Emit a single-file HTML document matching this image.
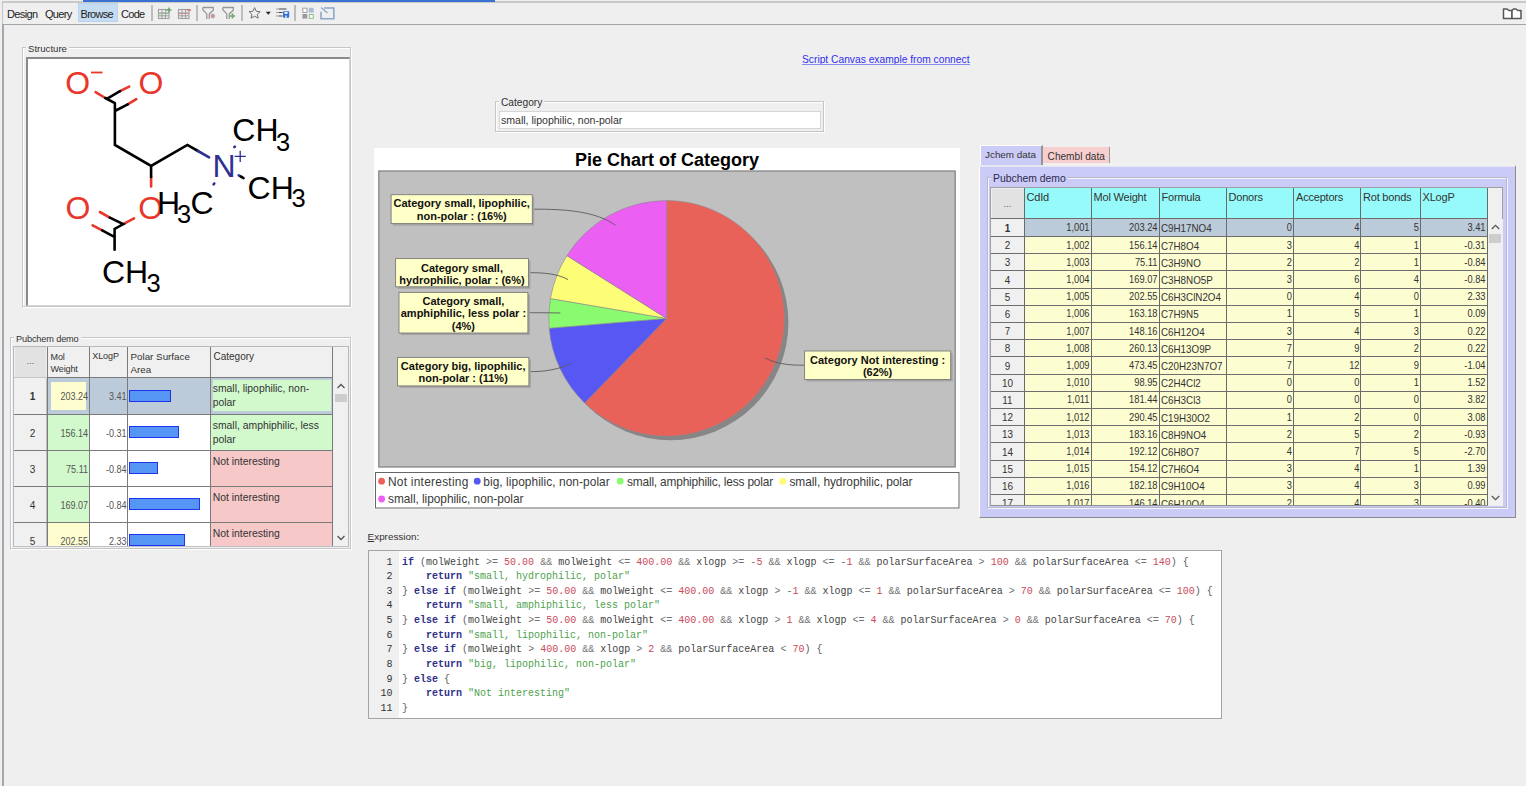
<!DOCTYPE html>
<html><head><meta charset="utf-8">
<style>
*{box-sizing:border-box}
html,body{margin:0;padding:0}
body{width:1526px;height:786px;overflow:hidden;background:#efefef;position:relative;font-family:"Liberation Sans",sans-serif;color:#222}
.a{position:absolute}
.t{position:absolute;white-space:nowrap;line-height:1}
/* group box */
.gb{position:absolute;border:1px solid #c6c6c6;box-shadow:inset 1px 1px 0 #fff,1px 1px 0 #fff}
.gbl{position:absolute;background:#efefef;padding:0 2px;font-size:10px;line-height:10px;color:#333}
</style></head><body>

<!-- top strip -->
<div class="a" style="left:2px;top:1px;width:1524px;height:2px;background:#c9c9c9"></div>
<div class="a" style="left:83px;top:0;width:412px;height:2px;background:#3a72d2"></div>
<!-- left window line -->
<div class="a" style="left:2px;top:2px;width:1px;height:22px;background:#c4c4c4"></div>
<div class="a" style="left:2px;top:24px;width:2px;height:762px;background:#a6a6ac"></div>
<!-- toolbar bottom line -->
<div class="a" style="left:2px;top:24px;width:1524px;height:1px;background:#a4a4aa"></div>

<div id="toolbar">
<div class="a" style="left:78px;top:3px;width:40px;height:19px;background:#c5dcf3;border:1px solid #b9d3ee"></div>
<div class="t" style="left:7px;top:9px;font-size:11px;letter-spacing:-0.6px;color:#222">Design</div>
<div class="t" style="left:45px;top:9px;font-size:11px;letter-spacing:-0.7px;color:#222">Query</div>
<div class="t" style="left:80.5px;top:9px;font-size:11px;letter-spacing:-0.7px;color:#222">Browse</div>
<div class="t" style="left:121px;top:9px;font-size:11px;letter-spacing:-0.7px;color:#222">Code</div>
<div class="a" style="left:151px;top:5px;width:2px;height:16px;background:#bdbdbd"></div>
<div class="a" style="left:196px;top:5px;width:2px;height:16px;background:#bdbdbd"></div>
<div class="a" style="left:241px;top:5px;width:2px;height:16px;background:#bdbdbd"></div>
<div class="a" style="left:294px;top:5px;width:2px;height:16px;background:#bdbdbd"></div>
<svg class="a" style="left:150px;top:0" width="200" height="24" viewBox="150 0 200 24">
 <!-- table plus -->
 <g fill="none" stroke="#a0a0a0" stroke-width="1.1">
  <rect x="158.5" y="9.5" width="10.5" height="9"/>
  <line x1="158.5" y1="13" x2="169" y2="13"/><line x1="158.5" y1="15.8" x2="169" y2="15.8"/>
  <line x1="162" y1="9.5" x2="162" y2="18.5"/><line x1="165.5" y1="9.5" x2="165.5" y2="18.5"/>
 </g>
 <line x1="158.5" y1="13.5" x2="169" y2="13.5" stroke="#8fb88f" stroke-width="1"/>
 <path d="M169 7.5v5M166.5 10h5" stroke="#6fa56f" stroke-width="1.6"/>
 <!-- table minus -->
 <g fill="none" stroke="#a0a0a0" stroke-width="1.1">
  <rect x="178.5" y="9.5" width="10.5" height="9"/>
  <line x1="178.5" y1="13" x2="189" y2="13"/><line x1="178.5" y1="15.8" x2="189" y2="15.8"/>
  <line x1="182" y1="9.5" x2="182" y2="18.5"/><line x1="185.5" y1="9.5" x2="185.5" y2="18.5"/>
 </g>
 <line x1="178.5" y1="13.5" x2="189" y2="13.5" stroke="#c89090" stroke-width="1"/>
 <path d="M187 10h4" stroke="#d07070" stroke-width="1.4"/>
 <!-- filter dot -->
 <path d="M202.8 7.5h10.5v2.8l-4 3.6v5" fill="none" stroke="#989898" stroke-width="1.3"/>
 <path d="M202.8 7.5v2.2l4 4.2v5" fill="none" stroke="#989898" stroke-width="1.3"/>
 <circle cx="212.8" cy="16.1" r="2.3" fill="#c99a9a"/>
 <!-- filter plus -->
 <path d="M222.8 7.5h10.5v2.8l-4 3.6v5" fill="none" stroke="#989898" stroke-width="1.3"/>
 <path d="M222.8 7.5v2.2l4 4.2v5" fill="none" stroke="#989898" stroke-width="1.3"/>
 <path d="M232.5 13.5v5M230 16h5" stroke="#6fa56f" stroke-width="1.6"/>
 <!-- star -->
 <path d="M254.6 7.6l1.7 3.7 3.9.4-2.9 2.6.9 3.9-3.6-2-3.6 2 .9-3.9-2.9-2.6 3.9-.4z" fill="none" stroke="#707070" stroke-width="1" stroke-linejoin="round"/>
 <path d="M265.8 11.8h5l-2.5 3z" fill="#222"/>
 <!-- list save -->
 <path d="M276.5 9h1M278.5 9h8M276.5 12.5h1M278.5 12.5h4M276.5 16h1M278.5 16h4" stroke="#444" stroke-width="1.1"/>
 <rect x="283" y="11.2" width="6.2" height="6.6" rx="0.8" fill="#3572d6"/>
 <rect x="284.5" y="12" width="3" height="1.8" fill="#fff"/>
 <rect x="285" y="15.5" width="2" height="2.3" fill="#bcd0f0"/>
 <!-- grid -->
 <rect x="302.8" y="8.2" width="4.2" height="4.2" fill="#fff" stroke="#a0a0a0" stroke-width="1"/>
 <rect x="308.8" y="7.8" width="4.8" height="4.8" fill="#a9bcd6"/>
 <rect x="302.4" y="14" width="4.8" height="4.6" fill="#9a9a9a"/>
 <rect x="309.3" y="14.5" width="4" height="3.8" fill="#fff" stroke="#8fb88f" stroke-width="1"/>
 <!-- arrow box -->
 <path d="M324 8h9.8v10.8h-12.8v-7" fill="none" stroke="#8aa6cb" stroke-width="1.6"/>
 <path d="M321 7.5l6.5 5.5" stroke="#8aa6cb" stroke-width="1.2"/>
</svg>
<svg class="a" style="left:1500px;top:6px" width="24" height="14" viewBox="0 0 24 14">
 <path d="M3.5 3v9.5h8.5v-8h-3.2l-1.8-1.5z" fill="#fff" stroke="#555" stroke-width="1.5" stroke-linejoin="round"/>
 <path d="M12 4.5v8h9v-8h-3.2l-1.8-1.5h-2.5z" fill="#fff" stroke="#555" stroke-width="1.5" stroke-linejoin="round"/>
</svg>
</div>
<div id="structure">
<div class="gb" style="left:22px;top:47px;width:329px;height:260px"></div>
<div class="gbl" style="left:26px;top:44px;font-size:9.6px;padding:0 2px">Structure</div>
<div class="a" style="left:26px;top:57px;width:324px;height:249px;background:#fff;border-top:2px solid #8a8a8a;border-left:2px solid #8a8a8a;border-right:1px solid #d4d4d4;border-bottom:1px solid #d4d4d4"></div>
<svg class="a" style="left:0;top:0" width="360" height="310" viewBox="0 0 360 310">
<g stroke-width="2.6" stroke-linecap="round" fill="none">
 <path stroke="#e8372b" d="M95.6 92.2L105.3 98M120 91.2L129.2 86.6M127.7 104.4L136.3 99.1M151.1 177L151.1 186.5M99.9 212L109.8 217.7M92.6 225.4L102.2 230.4M123.2 224.1L134 218.4"/>
 <path stroke="#000" stroke-linejoin="miter" d="M105.3 98L114.9 103.2M106.8 98.8L120 91.2M114.9 111L127.7 104.4M114.9 103.2L114.9 144.9L151.1 165.9L187.4 144.9L198 151M151.1 165.9L151.1 177M109.8 217.7L123.2 224.1L114.6 228.9L114.6 249.8M102.2 230.4L114.3 236.8"/>
 <path stroke="#2d3190" d="M198 151L209.1 157.3M234.3 147.2L234.9 146.6M238.7 175.4L241 176.7M213.6 184.3L214.3 183.5"/>
 <path stroke="#000" d="M241 176.7L243.5 178.2"/>
</g>
<g font-family="Liberation Sans" font-size="32" fill="#e8372b">
 <text x="65.3" y="94">O</text>
 <text x="138.6" y="94">O</text>
 <text x="65.5" y="219">O</text>
 <text x="138.3" y="219">O</text>
</g>
<rect x="91" y="71.6" width="11.5" height="1.8" fill="#e8372b"/>
<g font-family="Liberation Sans" font-size="32" fill="#000">
 <text x="232.3" y="140.6">CH</text><text x="276" y="150.7" font-size="25.5">3</text>
 <text x="247.6" y="198.8">CH</text><text x="291.6" y="207" font-size="25.5">3</text>
 <text x="157" y="213.6">H</text><text x="177" y="223" font-size="25.5">3</text><text x="190.6" y="213.6">C</text>
 <text x="102" y="283">CH</text><text x="146.6" y="291.6" font-size="25.5">3</text>
</g>
<text x="212.6" y="177.3" font-family="Liberation Sans" font-size="32" fill="#2d3190">N</text>
<path d="M234.6 156.4h11.2M240.2 150.8v11.2" stroke="#2d3190" stroke-width="1.3"/>
</svg>
</div>
<div id="lefttable">
<div class="gb" style="left:10px;top:337px;width:341px;height:212px"></div>
<div class="gbl" style="left:14px;top:333.5px;font-size:9.2px;letter-spacing:-0.15px">Pubchem demo</div>
<div class="a" style="left:13px;top:346px;width:336px;height:201px;background:#f0f0f0;border:1px solid #b8b8c0"></div>
<div class="a" style="left:15px;top:347px;width:31px;height:30px;background:#e2e2e2"></div>
<div class="t" style="left:15px;top:357px;width:31px;text-align:center;font-size:9px;color:#555">...</div>
<div class="t" style="left:50.5px;top:350.5px;font-size:9px;line-height:12.3px;color:#333;letter-spacing:-0.1px;white-space:normal;width:36px">Mol Weight</div>
<div class="t" style="left:92.3px;top:352px;font-size:9px;line-height:9px;color:#333;letter-spacing:-0.1px">XLogP</div>
<div class="t" style="left:130.5px;top:349.5px;font-size:9.8px;line-height:13.3px;color:#333;white-space:normal;width:75px">Polar Surface Area</div>
<div class="t" style="left:213.5px;top:348.5px;font-size:10px;line-height:15px;color:#333">Category</div>
<div class="a" style="left:14px;top:377px;width:33px;height:37px;background:#f0f0f0;border-right:1px solid #c0c0c0"></div>
<div class="t" style="left:16px;top:392.2px;width:33px;text-align:center;font-size:10px;font-weight:bold;color:#333">1</div>
<div class="a" style="left:47px;top:377px;width:42.5px;height:37px;background:#bccbda"></div>
<div class="a" style="left:51px;top:382px;width:34.5px;height:28px;background:#fdfdd0"></div>
<div class="t" style="left:40px;top:391.2px;width:48px;text-align:right;font-size:11px;color:#555;transform:scaleX(0.82);transform-origin:100% 50%">203.24</div>
<div class="a" style="left:89.5px;top:377px;width:38px;height:37px;background:#bccbda"></div>
<div class="t" style="left:89.5px;top:391.2px;width:36.5px;text-align:right;font-size:11px;color:#555;transform:scaleX(0.82);transform-origin:100% 50%">3.41</div>
<div class="a" style="left:127.5px;top:377px;width:83px;height:37px;background:#bccbda"></div>
<div class="a" style="left:129px;top:389.5px;width:42.30000000000001px;height:12px;background:#5596f5;border:1px solid #2233ee"></div>
<div class="a" style="left:210.5px;top:377px;width:122.5px;height:37px;background:#bccbda"></div>
<div class="a" style="left:212px;top:379px;width:119.5px;height:33px;background:#d2f9cc;border:1.5px solid #bfd0dc"></div>
<div class="t" style="left:212.7px;top:381.5px;font-size:10.4px;line-height:14.5px;color:#333">small, lipophilic, non-<br>polar</div>
<div class="a" style="left:14px;top:414px;width:33px;height:36px;background:#f0f0f0;border-right:1px solid #c0c0c0"></div>
<div class="t" style="left:16px;top:428.7px;width:33px;text-align:center;font-size:10px;font-weight:normal;color:#333">2</div>
<div class="a" style="left:47px;top:414px;width:42.5px;height:36px;background:#d2f9cc"></div>
<div class="t" style="left:40px;top:427.7px;width:48px;text-align:right;font-size:11px;color:#555;transform:scaleX(0.82);transform-origin:100% 50%">156.14</div>
<div class="a" style="left:89.5px;top:414px;width:38px;height:36px;background:#fff"></div>
<div class="t" style="left:89.5px;top:427.7px;width:36.5px;text-align:right;font-size:11px;color:#555;transform:scaleX(0.82);transform-origin:100% 50%">-0.31</div>
<div class="a" style="left:127.5px;top:414px;width:83px;height:36px;background:#fff"></div>
<div class="a" style="left:129px;top:426px;width:50.30000000000001px;height:12px;background:#5596f5;border:1px solid #2233ee"></div>
<div class="a" style="left:210.5px;top:414px;width:122.5px;height:36px;background:#d2f9cc"></div>
<div class="t" style="left:212.7px;top:418.5px;font-size:10.4px;line-height:14.5px;color:#333">small, amphiphilic, less<br>polar</div>
<div class="a" style="left:14px;top:450px;width:33px;height:36px;background:#f0f0f0;border-right:1px solid #c0c0c0"></div>
<div class="t" style="left:16px;top:464.7px;width:33px;text-align:center;font-size:10px;font-weight:normal;color:#333">3</div>
<div class="a" style="left:47px;top:450px;width:42.5px;height:36px;background:#d2f9cc"></div>
<div class="t" style="left:40px;top:463.7px;width:48px;text-align:right;font-size:11px;color:#555;transform:scaleX(0.82);transform-origin:100% 50%">75.11</div>
<div class="a" style="left:89.5px;top:450px;width:38px;height:36px;background:#fff"></div>
<div class="t" style="left:89.5px;top:463.7px;width:36.5px;text-align:right;font-size:11px;color:#555;transform:scaleX(0.82);transform-origin:100% 50%">-0.84</div>
<div class="a" style="left:127.5px;top:450px;width:83px;height:36px;background:#fff"></div>
<div class="a" style="left:129px;top:462px;width:29.400000000000006px;height:12px;background:#5596f5;border:1px solid #2233ee"></div>
<div class="a" style="left:210.5px;top:450px;width:122.5px;height:36px;background:#f6c8c8"></div>
<div class="t" style="left:212.7px;top:454.5px;font-size:10.4px;line-height:14.5px;color:#333">Not interesting</div>
<div class="a" style="left:14px;top:486px;width:33px;height:36px;background:#f0f0f0;border-right:1px solid #c0c0c0"></div>
<div class="t" style="left:16px;top:500.7px;width:33px;text-align:center;font-size:10px;font-weight:normal;color:#333">4</div>
<div class="a" style="left:47px;top:486px;width:42.5px;height:36px;background:#d2f9cc"></div>
<div class="t" style="left:40px;top:499.7px;width:48px;text-align:right;font-size:11px;color:#555;transform:scaleX(0.82);transform-origin:100% 50%">169.07</div>
<div class="a" style="left:89.5px;top:486px;width:38px;height:36px;background:#fff"></div>
<div class="t" style="left:89.5px;top:499.7px;width:36.5px;text-align:right;font-size:11px;color:#555;transform:scaleX(0.82);transform-origin:100% 50%">-0.84</div>
<div class="a" style="left:127.5px;top:486px;width:83px;height:36px;background:#fff"></div>
<div class="a" style="left:129px;top:498px;width:70.80000000000001px;height:12px;background:#5596f5;border:1px solid #2233ee"></div>
<div class="a" style="left:210.5px;top:486px;width:122.5px;height:36px;background:#f6c8c8"></div>
<div class="t" style="left:212.7px;top:490.5px;font-size:10.4px;line-height:14.5px;color:#333">Not interesting</div>
<div class="a" style="left:14px;top:522px;width:33px;height:24px;background:#f0f0f0;border-right:1px solid #c0c0c0"></div>
<div class="t" style="left:16px;top:536.7px;width:33px;text-align:center;font-size:10px;font-weight:normal;color:#333">5</div>
<div class="a" style="left:47px;top:522px;width:42.5px;height:24px;background:#fdfdd0"></div>
<div class="t" style="left:40px;top:535.7px;width:48px;text-align:right;font-size:11px;color:#555;transform:scaleX(0.82);transform-origin:100% 50%">202.55</div>
<div class="a" style="left:89.5px;top:522px;width:38px;height:24px;background:#fff"></div>
<div class="t" style="left:89.5px;top:535.7px;width:36.5px;text-align:right;font-size:11px;color:#555;transform:scaleX(0.82);transform-origin:100% 50%">2.33</div>
<div class="a" style="left:127.5px;top:522px;width:83px;height:24px;background:#fff"></div>
<div class="a" style="left:129px;top:534px;width:56.19999999999999px;height:12px;background:#5596f5;border:1px solid #2233ee"></div>
<div class="a" style="left:210.5px;top:522px;width:122.5px;height:24px;background:#f6c8c8"></div>
<div class="t" style="left:212.7px;top:526.5px;font-size:10.4px;line-height:14.5px;color:#333">Not interesting</div>
<div class="a" style="left:46.5px;top:347px;width:1.2px;height:199px;background:#7a7a7a"></div>
<div class="a" style="left:89.0px;top:347px;width:1.2px;height:199px;background:#7a7a7a"></div>
<div class="a" style="left:127.0px;top:347px;width:1.2px;height:199px;background:#7a7a7a"></div>
<div class="a" style="left:210.0px;top:347px;width:1.2px;height:199px;background:#7a7a7a"></div>
<div class="a" style="left:332.2px;top:347px;width:1.2px;height:199px;background:#7a7a7a"></div>
<div class="a" style="left:14px;top:376.5px;width:319px;height:1.2px;background:#7a7a7a"></div>
<div class="a" style="left:14px;top:413.5px;width:319px;height:1.2px;background:#7a7a7a"></div>
<div class="a" style="left:14px;top:449.5px;width:319px;height:1.2px;background:#7a7a7a"></div>
<div class="a" style="left:14px;top:485.5px;width:319px;height:1.2px;background:#7a7a7a"></div>
<div class="a" style="left:14px;top:521.5px;width:319px;height:1.2px;background:#7a7a7a"></div>
<div class="a" style="left:14px;top:376.5px;width:33px;height:1px;background:#c8c8c8"></div>
<div class="a" style="left:13px;top:546px;width:336px;height:1px;background:#c0c0c8"></div>
<div class="a" style="left:333.5px;top:377px;width:14px;height:169px;background:#f0f0f0"></div>
<div class="a" style="left:335px;top:394px;width:12px;height:8px;background:#cdcdcd"></div>
<svg class="a" style="left:334px;top:380px" width="14" height="12"><path d="M3.5 8l3.5-3.5 3.5 3.5" fill="none" stroke="#555" stroke-width="1.3"/></svg>
<svg class="a" style="left:334px;top:532px" width="14" height="12"><path d="M3.5 4l3.5 3.5 3.5-3.5" fill="none" stroke="#555" stroke-width="1.3"/></svg>
</div>
<div id="center">
<div class="t" style="left:802px;top:55px;font-size:10.25px;color:#3030ee">Script Canvas example from connect</div>
<div class="a" style="left:802px;top:64px;width:168px;height:1px;background:#8a8af5"></div>
<div class="gb" style="left:495px;top:101px;width:329px;height:31px"></div>
<div class="gbl" style="left:499px;top:98px;font-size:10.2px;padding:0 2px">Category</div>
<div class="a" style="left:499px;top:111px;width:322px;height:18px;background:#fff;border:1px solid #d6d6d6"></div>
<div class="t" style="left:501px;top:115px;font-size:10.55px;color:#333">small, lipophilic, non-polar</div>
</div>
<div id="chart">
<div class="a" style="left:374px;top:148px;width:586px;height:361px;background:#fff"></div>
<div class="t" style="left:374px;top:151px;width:586px;text-align:center;font-size:18px;font-weight:bold;color:#000">Pie Chart of Category</div>
<svg class="a" style="left:0;top:0" width="970" height="520" viewBox="0 0 970 520">
 <rect x="378.8" y="171" width="576.4" height="296" fill="#c0c0c0" stroke="#7f7f7f" stroke-width="1.2"/>
 <circle cx="670.6" cy="322.4" r="117.8" fill="#868686"/>
 <path d="M666.6 318.4L666.60 200.60A117.8 117.8 0 1 1 584.62 403.00Z" fill="#e9625a" stroke="#8a8a8a" stroke-width="0.6"/><path d="M666.6 318.4L584.62 403.00A117.8 117.8 0 0 1 549.21 328.26Z" fill="#5757f4" stroke="#8a8a8a" stroke-width="0.6"/><path d="M666.6 318.4L549.21 328.26A117.8 117.8 0 0 1 550.48 298.55Z" fill="#8afb70" stroke="#8a8a8a" stroke-width="0.6"/><path d="M666.6 318.4L550.48 298.55A117.8 117.8 0 0 1 566.92 255.63Z" fill="#fdfd78" stroke="#8a8a8a" stroke-width="0.6"/><path d="M666.6 318.4L566.92 255.63A117.8 117.8 0 0 1 666.60 200.60Z" fill="#eb60f3" stroke="#8a8a8a" stroke-width="0.6"/>
 <g fill="none" stroke="#5a5a5a" stroke-width="0.9">
  <path d="M532.3 209.2C565 209 595 211 615.5 225.2"/>
  <path d="M528.5 272.7C545 272.5 558 274 568 279.6"/>
  <path d="M527.9 312.7C540 312.7 552 312.8 560.3 313"/>
  <path d="M528.9 371.6C545 372 560 369 570.8 363.5"/>
  <path d="M804.6 365.2C790 365.2 778 364.5 765 358"/>
 </g>
 <g fill="#a4a4a4">
  <rect x="393" y="196.7" width="141.2" height="28.9"/>
  <rect x="397.6" y="260.6" width="132.9" height="28.2"/>
  <rect x="401" y="294.4" width="128.9" height="40.6"/>
  <rect x="399.6" y="359.4" width="131.3" height="28.5"/>
  <rect x="806.6" y="353" width="146.1" height="28.5"/>
 </g>
 <g fill="#ffffc8" stroke="#7a7a7a" stroke-width="0.9">
  <rect x="391.1" y="194.7" width="141.2" height="28.9"/>
  <rect x="395.6" y="258.6" width="132.9" height="28.2"/>
  <rect x="399" y="292.4" width="128.9" height="40.6"/>
  <rect x="397.6" y="357.4" width="131.3" height="28.5"/>
  <rect x="804.6" y="351" width="146.1" height="28.5"/>
 </g>
 <g font-family="Liberation Sans" font-weight="bold" font-size="11" fill="#111" text-anchor="middle">
  <text x="461.7" y="207.3">Category small, lipophilic,</text><text x="461.7" y="219.5">non-polar : (16%)</text>
  <text x="462" y="271.5">Category small,</text><text x="462" y="283.6">hydrophilic, polar : (6%)</text>
  <text x="463.4" y="304.6">Category small,</text><text x="463.4" y="316.9">amphiphilic, less polar :</text><text x="463.4" y="329.8">(4%)</text>
  <text x="463.2" y="369.5">Category big, lipophilic,</text><text x="463.2" y="381.7">non-polar : (11%)</text>
  <text x="877.6" y="363.5">Category Not interesting :</text><text x="877.6" y="375.9">(62%)</text>
 </g>
 <rect x="375.5" y="472.5" width="583.5" height="35.5" fill="#fff" stroke="#666" stroke-width="1"/>
 <g>
  <circle cx="381.6" cy="481.2" r="3.4" fill="#e9625a"/>
  <circle cx="477.2" cy="481.2" r="3.4" fill="#5757f4"/>
  <circle cx="620.2" cy="481.2" r="3.4" fill="#8afb70"/>
  <circle cx="782.8" cy="481.2" r="3.5" fill="#fdfd78"/>
  <circle cx="381.6" cy="499" r="3.4" fill="#eb60f3"/>
 </g>
 <g font-family="Liberation Sans" font-size="11.9" fill="#3a3a3a">
  <text x="388" y="485.5" letter-spacing="0.26">Not interesting</text>
  <text x="483.3" y="485.5" letter-spacing="0.06">big, lipophilic, non-polar</text>
  <text x="627" y="485.5" letter-spacing="-0.18">small, amphiphilic, less polar</text>
  <text x="789.4" y="485.5" letter-spacing="-0.05">small, hydrophilic, polar</text>
  <text x="388" y="503.2" letter-spacing="-0.05">small, lipophilic, non-polar</text>
 </g>
</svg>
</div>
<div id="righttable">
<div class="a" style="left:980px;top:145px;width:63px;height:20px;background:#cbcbf7;border-top:1px solid #fff;border-left:1px solid #fff;border-right:2px solid #959598"></div>
<div class="a" style="left:1042.5px;top:147px;width:67px;height:16px;background:#f7cfcf;border-right:1px solid #999"></div>
<div class="t" style="left:985px;top:150px;font-size:9.9px;color:#333">Jchem data</div>
<div class="t" style="left:1047.6px;top:152px;font-size:10.1px;color:#333">Chembl data</div>
<div class="a" style="left:979px;top:165px;width:537px;height:352.5px;background:#cbcbf7;border-top:2px solid #e6e6f2;border-left:1px solid #fff;border-right:1.5px solid #8a8a8a;border-bottom:1.5px solid #8a8a8a"></div>
<div class="a" style="left:1043px;top:163px;width:472px;height:3px;background:#f0f0f0"></div>
<div class="a" style="left:987px;top:177px;width:519.5px;height:331px;border:1px solid #b8b8c8;box-shadow:inset 1px 1px 0 #f4f4fc,1px 1px 0 #f4f4fc"></div>
<div class="a" style="left:991px;top:173px;width:77px;height:10px;background:#cbcbf7"></div>
<div class="t" style="left:993px;top:174px;font-size:10.4px;color:#2a2a50">Pubchem demo</div>
<div class="a" style="left:990px;top:187px;width:513px;height:319px;background:#f0f0f0;border:1px solid #a0a0a0"></div>
<div class="a" style="left:991.5px;top:188.5px;width:32px;height:29px;background:#e2e2e2"></div>
<div class="t" style="left:991px;top:200px;width:33px;text-align:center;font-size:9px;color:#555">...</div>
<div class="a" style="left:1024.5px;top:188px;width:66.5px;height:30px;background:#96fafa"></div>
<div class="t" style="left:1026.5px;top:191.5px;font-size:11px;letter-spacing:-0.2px;color:#333">CdId</div>
<div class="a" style="left:1091.5px;top:188px;width:67.5px;height:30px;background:#96fafa"></div>
<div class="t" style="left:1093.5px;top:191.5px;font-size:11px;letter-spacing:-0.2px;color:#333">Mol Weight</div>
<div class="a" style="left:1159.5px;top:188px;width:66.5px;height:30px;background:#96fafa"></div>
<div class="t" style="left:1161.5px;top:191.5px;font-size:11px;letter-spacing:-0.2px;color:#333">Formula</div>
<div class="a" style="left:1226.5px;top:188px;width:67.0px;height:30px;background:#96fafa"></div>
<div class="t" style="left:1228.5px;top:191.5px;font-size:11px;letter-spacing:-0.2px;color:#333">Donors</div>
<div class="a" style="left:1294.0px;top:188px;width:66.5px;height:30px;background:#96fafa"></div>
<div class="t" style="left:1296.0px;top:191.5px;font-size:11px;letter-spacing:-0.2px;color:#333">Acceptors</div>
<div class="a" style="left:1361.0px;top:188px;width:59.0px;height:30px;background:#96fafa"></div>
<div class="t" style="left:1363.0px;top:191.5px;font-size:11px;letter-spacing:-0.2px;color:#333">Rot bonds</div>
<div class="a" style="left:1420.5px;top:188px;width:66.5px;height:30px;background:#96fafa"></div>
<div class="t" style="left:1422.5px;top:191.5px;font-size:11px;letter-spacing:-0.2px;color:#333">XLogP</div>
<div class="a" style="left:0;top:0;width:1526px;height:505.5px;overflow:hidden">
<div class="a" style="left:991px;top:218.5px;width:33px;height:18.0px;background:#f0f0f0"></div>
<div class="a" style="left:1024.3px;top:218.5px;width:463px;height:18.0px;background:#bccbda"></div>
<div class="t" style="left:991px;top:222.5px;width:33px;text-align:center;font-size:11px;font-weight:bold;color:#333;transform:scaleX(0.9)">1</div>
<div class="t" style="left:1024px;top:222.0px;width:65.5px;text-align:right;font-size:10.8px;color:#333;transform:scaleX(0.86);transform-origin:100% 50%">1,001</div>
<div class="t" style="left:1091px;top:222.0px;width:66.5px;text-align:right;font-size:10.8px;color:#333;transform:scaleX(0.86);transform-origin:100% 50%">203.24</div>
<div class="t" style="left:1161px;top:223.0px;font-size:10.9px;color:#333;transform:scaleX(0.9);transform-origin:0 50%">C9H17NO4</div>
<div class="t" style="left:1226px;top:222.0px;width:66.0px;text-align:right;font-size:10.8px;color:#333;transform:scaleX(0.86);transform-origin:100% 50%">0</div>
<div class="t" style="left:1293.5px;top:222.0px;width:65.5px;text-align:right;font-size:10.8px;color:#333;transform:scaleX(0.86);transform-origin:100% 50%">4</div>
<div class="t" style="left:1360.5px;top:222.0px;width:58.0px;text-align:right;font-size:10.8px;color:#333;transform:scaleX(0.86);transform-origin:100% 50%">5</div>
<div class="t" style="left:1420px;top:222.0px;width:65.5px;text-align:right;font-size:10.8px;color:#333;transform:scaleX(0.86);transform-origin:100% 50%">3.41</div>
<div class="a" style="left:991px;top:236.5px;width:33px;height:17.19999999999999px;background:#f0f0f0"></div>
<div class="a" style="left:1024.3px;top:236.5px;width:463px;height:17.19999999999999px;background:#fdfdd2"></div>
<div class="t" style="left:991px;top:240.1px;width:33px;text-align:center;font-size:11px;font-weight:normal;color:#333;transform:scaleX(0.9)">2</div>
<div class="t" style="left:1024px;top:239.6px;width:65.5px;text-align:right;font-size:10.8px;color:#333;transform:scaleX(0.86);transform-origin:100% 50%">1,002</div>
<div class="t" style="left:1091px;top:239.6px;width:66.5px;text-align:right;font-size:10.8px;color:#333;transform:scaleX(0.86);transform-origin:100% 50%">156.14</div>
<div class="t" style="left:1161px;top:240.6px;font-size:10.9px;color:#333;transform:scaleX(0.9);transform-origin:0 50%">C7H8O4</div>
<div class="t" style="left:1226px;top:239.6px;width:66.0px;text-align:right;font-size:10.8px;color:#333;transform:scaleX(0.86);transform-origin:100% 50%">3</div>
<div class="t" style="left:1293.5px;top:239.6px;width:65.5px;text-align:right;font-size:10.8px;color:#333;transform:scaleX(0.86);transform-origin:100% 50%">4</div>
<div class="t" style="left:1360.5px;top:239.6px;width:58.0px;text-align:right;font-size:10.8px;color:#333;transform:scaleX(0.86);transform-origin:100% 50%">1</div>
<div class="t" style="left:1420px;top:239.6px;width:65.5px;text-align:right;font-size:10.8px;color:#333;transform:scaleX(0.86);transform-origin:100% 50%">-0.31</div>
<div class="a" style="left:991px;top:253.7px;width:33px;height:17.19999999999999px;background:#f0f0f0"></div>
<div class="a" style="left:1024.3px;top:253.7px;width:463px;height:17.19999999999999px;background:#fdfdd2"></div>
<div class="t" style="left:991px;top:257.29999999999995px;width:33px;text-align:center;font-size:11px;font-weight:normal;color:#333;transform:scaleX(0.9)">3</div>
<div class="t" style="left:1024px;top:256.79999999999995px;width:65.5px;text-align:right;font-size:10.8px;color:#333;transform:scaleX(0.86);transform-origin:100% 50%">1,003</div>
<div class="t" style="left:1091px;top:256.79999999999995px;width:66.5px;text-align:right;font-size:10.8px;color:#333;transform:scaleX(0.86);transform-origin:100% 50%">75.11</div>
<div class="t" style="left:1161px;top:257.79999999999995px;font-size:10.9px;color:#333;transform:scaleX(0.9);transform-origin:0 50%">C3H9NO</div>
<div class="t" style="left:1226px;top:256.79999999999995px;width:66.0px;text-align:right;font-size:10.8px;color:#333;transform:scaleX(0.86);transform-origin:100% 50%">2</div>
<div class="t" style="left:1293.5px;top:256.79999999999995px;width:65.5px;text-align:right;font-size:10.8px;color:#333;transform:scaleX(0.86);transform-origin:100% 50%">2</div>
<div class="t" style="left:1360.5px;top:256.79999999999995px;width:58.0px;text-align:right;font-size:10.8px;color:#333;transform:scaleX(0.86);transform-origin:100% 50%">1</div>
<div class="t" style="left:1420px;top:256.79999999999995px;width:65.5px;text-align:right;font-size:10.8px;color:#333;transform:scaleX(0.86);transform-origin:100% 50%">-0.84</div>
<div class="a" style="left:991px;top:270.9px;width:33px;height:17.200000000000045px;background:#f0f0f0"></div>
<div class="a" style="left:1024.3px;top:270.9px;width:463px;height:17.200000000000045px;background:#fdfdd2"></div>
<div class="t" style="left:991px;top:274.5px;width:33px;text-align:center;font-size:11px;font-weight:normal;color:#333;transform:scaleX(0.9)">4</div>
<div class="t" style="left:1024px;top:274.0px;width:65.5px;text-align:right;font-size:10.8px;color:#333;transform:scaleX(0.86);transform-origin:100% 50%">1,004</div>
<div class="t" style="left:1091px;top:274.0px;width:66.5px;text-align:right;font-size:10.8px;color:#333;transform:scaleX(0.86);transform-origin:100% 50%">169.07</div>
<div class="t" style="left:1161px;top:275.0px;font-size:10.9px;color:#333;transform:scaleX(0.9);transform-origin:0 50%">C3H8NO5P</div>
<div class="t" style="left:1226px;top:274.0px;width:66.0px;text-align:right;font-size:10.8px;color:#333;transform:scaleX(0.86);transform-origin:100% 50%">3</div>
<div class="t" style="left:1293.5px;top:274.0px;width:65.5px;text-align:right;font-size:10.8px;color:#333;transform:scaleX(0.86);transform-origin:100% 50%">6</div>
<div class="t" style="left:1360.5px;top:274.0px;width:58.0px;text-align:right;font-size:10.8px;color:#333;transform:scaleX(0.86);transform-origin:100% 50%">4</div>
<div class="t" style="left:1420px;top:274.0px;width:65.5px;text-align:right;font-size:10.8px;color:#333;transform:scaleX(0.86);transform-origin:100% 50%">-0.84</div>
<div class="a" style="left:991px;top:288.1px;width:33px;height:17.19999999999999px;background:#f0f0f0"></div>
<div class="a" style="left:1024.3px;top:288.1px;width:463px;height:17.19999999999999px;background:#fdfdd2"></div>
<div class="t" style="left:991px;top:291.70000000000005px;width:33px;text-align:center;font-size:11px;font-weight:normal;color:#333;transform:scaleX(0.9)">5</div>
<div class="t" style="left:1024px;top:291.20000000000005px;width:65.5px;text-align:right;font-size:10.8px;color:#333;transform:scaleX(0.86);transform-origin:100% 50%">1,005</div>
<div class="t" style="left:1091px;top:291.20000000000005px;width:66.5px;text-align:right;font-size:10.8px;color:#333;transform:scaleX(0.86);transform-origin:100% 50%">202.55</div>
<div class="t" style="left:1161px;top:292.20000000000005px;font-size:10.9px;color:#333;transform:scaleX(0.9);transform-origin:0 50%">C6H3ClN2O4</div>
<div class="t" style="left:1226px;top:291.20000000000005px;width:66.0px;text-align:right;font-size:10.8px;color:#333;transform:scaleX(0.86);transform-origin:100% 50%">0</div>
<div class="t" style="left:1293.5px;top:291.20000000000005px;width:65.5px;text-align:right;font-size:10.8px;color:#333;transform:scaleX(0.86);transform-origin:100% 50%">4</div>
<div class="t" style="left:1360.5px;top:291.20000000000005px;width:58.0px;text-align:right;font-size:10.8px;color:#333;transform:scaleX(0.86);transform-origin:100% 50%">0</div>
<div class="t" style="left:1420px;top:291.20000000000005px;width:65.5px;text-align:right;font-size:10.8px;color:#333;transform:scaleX(0.86);transform-origin:100% 50%">2.33</div>
<div class="a" style="left:991px;top:305.3px;width:33px;height:17.19999999999999px;background:#f0f0f0"></div>
<div class="a" style="left:1024.3px;top:305.3px;width:463px;height:17.19999999999999px;background:#fdfdd2"></div>
<div class="t" style="left:991px;top:308.9px;width:33px;text-align:center;font-size:11px;font-weight:normal;color:#333;transform:scaleX(0.9)">6</div>
<div class="t" style="left:1024px;top:308.4px;width:65.5px;text-align:right;font-size:10.8px;color:#333;transform:scaleX(0.86);transform-origin:100% 50%">1,006</div>
<div class="t" style="left:1091px;top:308.4px;width:66.5px;text-align:right;font-size:10.8px;color:#333;transform:scaleX(0.86);transform-origin:100% 50%">163.18</div>
<div class="t" style="left:1161px;top:309.4px;font-size:10.9px;color:#333;transform:scaleX(0.9);transform-origin:0 50%">C7H9N5</div>
<div class="t" style="left:1226px;top:308.4px;width:66.0px;text-align:right;font-size:10.8px;color:#333;transform:scaleX(0.86);transform-origin:100% 50%">1</div>
<div class="t" style="left:1293.5px;top:308.4px;width:65.5px;text-align:right;font-size:10.8px;color:#333;transform:scaleX(0.86);transform-origin:100% 50%">5</div>
<div class="t" style="left:1360.5px;top:308.4px;width:58.0px;text-align:right;font-size:10.8px;color:#333;transform:scaleX(0.86);transform-origin:100% 50%">1</div>
<div class="t" style="left:1420px;top:308.4px;width:65.5px;text-align:right;font-size:10.8px;color:#333;transform:scaleX(0.86);transform-origin:100% 50%">0.09</div>
<div class="a" style="left:991px;top:322.5px;width:33px;height:17.19999999999999px;background:#f0f0f0"></div>
<div class="a" style="left:1024.3px;top:322.5px;width:463px;height:17.19999999999999px;background:#fdfdd2"></div>
<div class="t" style="left:991px;top:326.1px;width:33px;text-align:center;font-size:11px;font-weight:normal;color:#333;transform:scaleX(0.9)">7</div>
<div class="t" style="left:1024px;top:325.6px;width:65.5px;text-align:right;font-size:10.8px;color:#333;transform:scaleX(0.86);transform-origin:100% 50%">1,007</div>
<div class="t" style="left:1091px;top:325.6px;width:66.5px;text-align:right;font-size:10.8px;color:#333;transform:scaleX(0.86);transform-origin:100% 50%">148.16</div>
<div class="t" style="left:1161px;top:326.6px;font-size:10.9px;color:#333;transform:scaleX(0.9);transform-origin:0 50%">C6H12O4</div>
<div class="t" style="left:1226px;top:325.6px;width:66.0px;text-align:right;font-size:10.8px;color:#333;transform:scaleX(0.86);transform-origin:100% 50%">3</div>
<div class="t" style="left:1293.5px;top:325.6px;width:65.5px;text-align:right;font-size:10.8px;color:#333;transform:scaleX(0.86);transform-origin:100% 50%">4</div>
<div class="t" style="left:1360.5px;top:325.6px;width:58.0px;text-align:right;font-size:10.8px;color:#333;transform:scaleX(0.86);transform-origin:100% 50%">3</div>
<div class="t" style="left:1420px;top:325.6px;width:65.5px;text-align:right;font-size:10.8px;color:#333;transform:scaleX(0.86);transform-origin:100% 50%">0.22</div>
<div class="a" style="left:991px;top:339.7px;width:33px;height:17.19999999999999px;background:#f0f0f0"></div>
<div class="a" style="left:1024.3px;top:339.7px;width:463px;height:17.19999999999999px;background:#fdfdd2"></div>
<div class="t" style="left:991px;top:343.29999999999995px;width:33px;text-align:center;font-size:11px;font-weight:normal;color:#333;transform:scaleX(0.9)">8</div>
<div class="t" style="left:1024px;top:342.79999999999995px;width:65.5px;text-align:right;font-size:10.8px;color:#333;transform:scaleX(0.86);transform-origin:100% 50%">1,008</div>
<div class="t" style="left:1091px;top:342.79999999999995px;width:66.5px;text-align:right;font-size:10.8px;color:#333;transform:scaleX(0.86);transform-origin:100% 50%">260.13</div>
<div class="t" style="left:1161px;top:343.79999999999995px;font-size:10.9px;color:#333;transform:scaleX(0.9);transform-origin:0 50%">C6H13O9P</div>
<div class="t" style="left:1226px;top:342.79999999999995px;width:66.0px;text-align:right;font-size:10.8px;color:#333;transform:scaleX(0.86);transform-origin:100% 50%">7</div>
<div class="t" style="left:1293.5px;top:342.79999999999995px;width:65.5px;text-align:right;font-size:10.8px;color:#333;transform:scaleX(0.86);transform-origin:100% 50%">9</div>
<div class="t" style="left:1360.5px;top:342.79999999999995px;width:58.0px;text-align:right;font-size:10.8px;color:#333;transform:scaleX(0.86);transform-origin:100% 50%">2</div>
<div class="t" style="left:1420px;top:342.79999999999995px;width:65.5px;text-align:right;font-size:10.8px;color:#333;transform:scaleX(0.86);transform-origin:100% 50%">0.22</div>
<div class="a" style="left:991px;top:356.9px;width:33px;height:17.200000000000045px;background:#f0f0f0"></div>
<div class="a" style="left:1024.3px;top:356.9px;width:463px;height:17.200000000000045px;background:#fdfdd2"></div>
<div class="t" style="left:991px;top:360.5px;width:33px;text-align:center;font-size:11px;font-weight:normal;color:#333;transform:scaleX(0.9)">9</div>
<div class="t" style="left:1024px;top:360.0px;width:65.5px;text-align:right;font-size:10.8px;color:#333;transform:scaleX(0.86);transform-origin:100% 50%">1,009</div>
<div class="t" style="left:1091px;top:360.0px;width:66.5px;text-align:right;font-size:10.8px;color:#333;transform:scaleX(0.86);transform-origin:100% 50%">473.45</div>
<div class="t" style="left:1161px;top:361.0px;font-size:10.9px;color:#333;transform:scaleX(0.9);transform-origin:0 50%">C20H23N7O7</div>
<div class="t" style="left:1226px;top:360.0px;width:66.0px;text-align:right;font-size:10.8px;color:#333;transform:scaleX(0.86);transform-origin:100% 50%">7</div>
<div class="t" style="left:1293.5px;top:360.0px;width:65.5px;text-align:right;font-size:10.8px;color:#333;transform:scaleX(0.86);transform-origin:100% 50%">12</div>
<div class="t" style="left:1360.5px;top:360.0px;width:58.0px;text-align:right;font-size:10.8px;color:#333;transform:scaleX(0.86);transform-origin:100% 50%">9</div>
<div class="t" style="left:1420px;top:360.0px;width:65.5px;text-align:right;font-size:10.8px;color:#333;transform:scaleX(0.86);transform-origin:100% 50%">-1.04</div>
<div class="a" style="left:991px;top:374.1px;width:33px;height:17.199999999999932px;background:#f0f0f0"></div>
<div class="a" style="left:1024.3px;top:374.1px;width:463px;height:17.199999999999932px;background:#fdfdd2"></div>
<div class="t" style="left:991px;top:377.7px;width:33px;text-align:center;font-size:11px;font-weight:normal;color:#333;transform:scaleX(0.9)">10</div>
<div class="t" style="left:1024px;top:377.2px;width:65.5px;text-align:right;font-size:10.8px;color:#333;transform:scaleX(0.86);transform-origin:100% 50%">1,010</div>
<div class="t" style="left:1091px;top:377.2px;width:66.5px;text-align:right;font-size:10.8px;color:#333;transform:scaleX(0.86);transform-origin:100% 50%">98.95</div>
<div class="t" style="left:1161px;top:378.2px;font-size:10.9px;color:#333;transform:scaleX(0.9);transform-origin:0 50%">C2H4Cl2</div>
<div class="t" style="left:1226px;top:377.2px;width:66.0px;text-align:right;font-size:10.8px;color:#333;transform:scaleX(0.86);transform-origin:100% 50%">0</div>
<div class="t" style="left:1293.5px;top:377.2px;width:65.5px;text-align:right;font-size:10.8px;color:#333;transform:scaleX(0.86);transform-origin:100% 50%">0</div>
<div class="t" style="left:1360.5px;top:377.2px;width:58.0px;text-align:right;font-size:10.8px;color:#333;transform:scaleX(0.86);transform-origin:100% 50%">1</div>
<div class="t" style="left:1420px;top:377.2px;width:65.5px;text-align:right;font-size:10.8px;color:#333;transform:scaleX(0.86);transform-origin:100% 50%">1.52</div>
<div class="a" style="left:991px;top:391.29999999999995px;width:33px;height:17.200000000000045px;background:#f0f0f0"></div>
<div class="a" style="left:1024.3px;top:391.29999999999995px;width:463px;height:17.200000000000045px;background:#fdfdd2"></div>
<div class="t" style="left:991px;top:394.9px;width:33px;text-align:center;font-size:11px;font-weight:normal;color:#333;transform:scaleX(0.9)">11</div>
<div class="t" style="left:1024px;top:394.4px;width:65.5px;text-align:right;font-size:10.8px;color:#333;transform:scaleX(0.86);transform-origin:100% 50%">1,011</div>
<div class="t" style="left:1091px;top:394.4px;width:66.5px;text-align:right;font-size:10.8px;color:#333;transform:scaleX(0.86);transform-origin:100% 50%">181.44</div>
<div class="t" style="left:1161px;top:395.4px;font-size:10.9px;color:#333;transform:scaleX(0.9);transform-origin:0 50%">C6H3Cl3</div>
<div class="t" style="left:1226px;top:394.4px;width:66.0px;text-align:right;font-size:10.8px;color:#333;transform:scaleX(0.86);transform-origin:100% 50%">0</div>
<div class="t" style="left:1293.5px;top:394.4px;width:65.5px;text-align:right;font-size:10.8px;color:#333;transform:scaleX(0.86);transform-origin:100% 50%">0</div>
<div class="t" style="left:1360.5px;top:394.4px;width:58.0px;text-align:right;font-size:10.8px;color:#333;transform:scaleX(0.86);transform-origin:100% 50%">0</div>
<div class="t" style="left:1420px;top:394.4px;width:65.5px;text-align:right;font-size:10.8px;color:#333;transform:scaleX(0.86);transform-origin:100% 50%">3.82</div>
<div class="a" style="left:991px;top:408.5px;width:33px;height:17.19999999999999px;background:#f0f0f0"></div>
<div class="a" style="left:1024.3px;top:408.5px;width:463px;height:17.19999999999999px;background:#fdfdd2"></div>
<div class="t" style="left:991px;top:412.1px;width:33px;text-align:center;font-size:11px;font-weight:normal;color:#333;transform:scaleX(0.9)">12</div>
<div class="t" style="left:1024px;top:411.6px;width:65.5px;text-align:right;font-size:10.8px;color:#333;transform:scaleX(0.86);transform-origin:100% 50%">1,012</div>
<div class="t" style="left:1091px;top:411.6px;width:66.5px;text-align:right;font-size:10.8px;color:#333;transform:scaleX(0.86);transform-origin:100% 50%">290.45</div>
<div class="t" style="left:1161px;top:412.6px;font-size:10.9px;color:#333;transform:scaleX(0.9);transform-origin:0 50%">C19H30O2</div>
<div class="t" style="left:1226px;top:411.6px;width:66.0px;text-align:right;font-size:10.8px;color:#333;transform:scaleX(0.86);transform-origin:100% 50%">1</div>
<div class="t" style="left:1293.5px;top:411.6px;width:65.5px;text-align:right;font-size:10.8px;color:#333;transform:scaleX(0.86);transform-origin:100% 50%">2</div>
<div class="t" style="left:1360.5px;top:411.6px;width:58.0px;text-align:right;font-size:10.8px;color:#333;transform:scaleX(0.86);transform-origin:100% 50%">0</div>
<div class="t" style="left:1420px;top:411.6px;width:65.5px;text-align:right;font-size:10.8px;color:#333;transform:scaleX(0.86);transform-origin:100% 50%">3.08</div>
<div class="a" style="left:991px;top:425.7px;width:33px;height:17.19999999999999px;background:#f0f0f0"></div>
<div class="a" style="left:1024.3px;top:425.7px;width:463px;height:17.19999999999999px;background:#fdfdd2"></div>
<div class="t" style="left:991px;top:429.29999999999995px;width:33px;text-align:center;font-size:11px;font-weight:normal;color:#333;transform:scaleX(0.9)">13</div>
<div class="t" style="left:1024px;top:428.79999999999995px;width:65.5px;text-align:right;font-size:10.8px;color:#333;transform:scaleX(0.86);transform-origin:100% 50%">1,013</div>
<div class="t" style="left:1091px;top:428.79999999999995px;width:66.5px;text-align:right;font-size:10.8px;color:#333;transform:scaleX(0.86);transform-origin:100% 50%">183.16</div>
<div class="t" style="left:1161px;top:429.79999999999995px;font-size:10.9px;color:#333;transform:scaleX(0.9);transform-origin:0 50%">C8H9NO4</div>
<div class="t" style="left:1226px;top:428.79999999999995px;width:66.0px;text-align:right;font-size:10.8px;color:#333;transform:scaleX(0.86);transform-origin:100% 50%">2</div>
<div class="t" style="left:1293.5px;top:428.79999999999995px;width:65.5px;text-align:right;font-size:10.8px;color:#333;transform:scaleX(0.86);transform-origin:100% 50%">5</div>
<div class="t" style="left:1360.5px;top:428.79999999999995px;width:58.0px;text-align:right;font-size:10.8px;color:#333;transform:scaleX(0.86);transform-origin:100% 50%">2</div>
<div class="t" style="left:1420px;top:428.79999999999995px;width:65.5px;text-align:right;font-size:10.8px;color:#333;transform:scaleX(0.86);transform-origin:100% 50%">-0.93</div>
<div class="a" style="left:991px;top:442.9px;width:33px;height:17.200000000000045px;background:#f0f0f0"></div>
<div class="a" style="left:1024.3px;top:442.9px;width:463px;height:17.200000000000045px;background:#fdfdd2"></div>
<div class="t" style="left:991px;top:446.5px;width:33px;text-align:center;font-size:11px;font-weight:normal;color:#333;transform:scaleX(0.9)">14</div>
<div class="t" style="left:1024px;top:446.0px;width:65.5px;text-align:right;font-size:10.8px;color:#333;transform:scaleX(0.86);transform-origin:100% 50%">1,014</div>
<div class="t" style="left:1091px;top:446.0px;width:66.5px;text-align:right;font-size:10.8px;color:#333;transform:scaleX(0.86);transform-origin:100% 50%">192.12</div>
<div class="t" style="left:1161px;top:447.0px;font-size:10.9px;color:#333;transform:scaleX(0.9);transform-origin:0 50%">C6H8O7</div>
<div class="t" style="left:1226px;top:446.0px;width:66.0px;text-align:right;font-size:10.8px;color:#333;transform:scaleX(0.86);transform-origin:100% 50%">4</div>
<div class="t" style="left:1293.5px;top:446.0px;width:65.5px;text-align:right;font-size:10.8px;color:#333;transform:scaleX(0.86);transform-origin:100% 50%">7</div>
<div class="t" style="left:1360.5px;top:446.0px;width:58.0px;text-align:right;font-size:10.8px;color:#333;transform:scaleX(0.86);transform-origin:100% 50%">5</div>
<div class="t" style="left:1420px;top:446.0px;width:65.5px;text-align:right;font-size:10.8px;color:#333;transform:scaleX(0.86);transform-origin:100% 50%">-2.70</div>
<div class="a" style="left:991px;top:460.1px;width:33px;height:17.199999999999932px;background:#f0f0f0"></div>
<div class="a" style="left:1024.3px;top:460.1px;width:463px;height:17.199999999999932px;background:#fdfdd2"></div>
<div class="t" style="left:991px;top:463.7px;width:33px;text-align:center;font-size:11px;font-weight:normal;color:#333;transform:scaleX(0.9)">15</div>
<div class="t" style="left:1024px;top:463.2px;width:65.5px;text-align:right;font-size:10.8px;color:#333;transform:scaleX(0.86);transform-origin:100% 50%">1,015</div>
<div class="t" style="left:1091px;top:463.2px;width:66.5px;text-align:right;font-size:10.8px;color:#333;transform:scaleX(0.86);transform-origin:100% 50%">154.12</div>
<div class="t" style="left:1161px;top:464.2px;font-size:10.9px;color:#333;transform:scaleX(0.9);transform-origin:0 50%">C7H6O4</div>
<div class="t" style="left:1226px;top:463.2px;width:66.0px;text-align:right;font-size:10.8px;color:#333;transform:scaleX(0.86);transform-origin:100% 50%">3</div>
<div class="t" style="left:1293.5px;top:463.2px;width:65.5px;text-align:right;font-size:10.8px;color:#333;transform:scaleX(0.86);transform-origin:100% 50%">4</div>
<div class="t" style="left:1360.5px;top:463.2px;width:58.0px;text-align:right;font-size:10.8px;color:#333;transform:scaleX(0.86);transform-origin:100% 50%">1</div>
<div class="t" style="left:1420px;top:463.2px;width:65.5px;text-align:right;font-size:10.8px;color:#333;transform:scaleX(0.86);transform-origin:100% 50%">1.39</div>
<div class="a" style="left:991px;top:477.29999999999995px;width:33px;height:17.200000000000045px;background:#f0f0f0"></div>
<div class="a" style="left:1024.3px;top:477.29999999999995px;width:463px;height:17.200000000000045px;background:#fdfdd2"></div>
<div class="t" style="left:991px;top:480.9px;width:33px;text-align:center;font-size:11px;font-weight:normal;color:#333;transform:scaleX(0.9)">16</div>
<div class="t" style="left:1024px;top:480.4px;width:65.5px;text-align:right;font-size:10.8px;color:#333;transform:scaleX(0.86);transform-origin:100% 50%">1,016</div>
<div class="t" style="left:1091px;top:480.4px;width:66.5px;text-align:right;font-size:10.8px;color:#333;transform:scaleX(0.86);transform-origin:100% 50%">182.18</div>
<div class="t" style="left:1161px;top:481.4px;font-size:10.9px;color:#333;transform:scaleX(0.9);transform-origin:0 50%">C9H10O4</div>
<div class="t" style="left:1226px;top:480.4px;width:66.0px;text-align:right;font-size:10.8px;color:#333;transform:scaleX(0.86);transform-origin:100% 50%">3</div>
<div class="t" style="left:1293.5px;top:480.4px;width:65.5px;text-align:right;font-size:10.8px;color:#333;transform:scaleX(0.86);transform-origin:100% 50%">4</div>
<div class="t" style="left:1360.5px;top:480.4px;width:58.0px;text-align:right;font-size:10.8px;color:#333;transform:scaleX(0.86);transform-origin:100% 50%">3</div>
<div class="t" style="left:1420px;top:480.4px;width:65.5px;text-align:right;font-size:10.8px;color:#333;transform:scaleX(0.86);transform-origin:100% 50%">0.99</div>
<div class="a" style="left:991px;top:494.5px;width:33px;height:11.0px;background:#f0f0f0"></div>
<div class="a" style="left:1024.3px;top:494.5px;width:463px;height:11.0px;background:#fdfdd2"></div>
<div class="t" style="left:991px;top:498.1px;width:33px;text-align:center;font-size:11px;font-weight:normal;color:#333;transform:scaleX(0.9)">17</div>
<div class="t" style="left:1024px;top:497.6px;width:65.5px;text-align:right;font-size:10.8px;color:#333;transform:scaleX(0.86);transform-origin:100% 50%">1,017</div>
<div class="t" style="left:1091px;top:497.6px;width:66.5px;text-align:right;font-size:10.8px;color:#333;transform:scaleX(0.86);transform-origin:100% 50%">146.14</div>
<div class="t" style="left:1161px;top:498.6px;font-size:10.9px;color:#333;transform:scaleX(0.9);transform-origin:0 50%">C6H10O4</div>
<div class="t" style="left:1226px;top:497.6px;width:66.0px;text-align:right;font-size:10.8px;color:#333;transform:scaleX(0.86);transform-origin:100% 50%">2</div>
<div class="t" style="left:1293.5px;top:497.6px;width:65.5px;text-align:right;font-size:10.8px;color:#333;transform:scaleX(0.86);transform-origin:100% 50%">4</div>
<div class="t" style="left:1360.5px;top:497.6px;width:58.0px;text-align:right;font-size:10.8px;color:#333;transform:scaleX(0.86);transform-origin:100% 50%">3</div>
<div class="t" style="left:1420px;top:497.6px;width:65.5px;text-align:right;font-size:10.8px;color:#333;transform:scaleX(0.86);transform-origin:100% 50%">-0.40</div>
</div>
<div class="a" style="left:1023.5px;top:188px;width:1px;height:317.5px;background:#6a6a6a"></div>
<div class="a" style="left:1090.5px;top:188px;width:1px;height:317.5px;background:#6a6a6a"></div>
<div class="a" style="left:1158.5px;top:188px;width:1px;height:317.5px;background:#6a6a6a"></div>
<div class="a" style="left:1225.5px;top:188px;width:1px;height:317.5px;background:#6a6a6a"></div>
<div class="a" style="left:1293.0px;top:188px;width:1px;height:317.5px;background:#6a6a6a"></div>
<div class="a" style="left:1360.0px;top:188px;width:1px;height:317.5px;background:#6a6a6a"></div>
<div class="a" style="left:1419.5px;top:188px;width:1px;height:317.5px;background:#6a6a6a"></div>
<div class="a" style="left:1486.5px;top:188px;width:1px;height:317.5px;background:#6a6a6a"></div>
<div class="a" style="left:991px;top:217.9px;width:496.5px;height:1.2px;background:#6e6e6e"></div>
<div class="a" style="left:991px;top:235.9px;width:496.5px;height:1.2px;background:#6e6e6e"></div>
<div class="a" style="left:991px;top:253.1px;width:496.5px;height:1.2px;background:#6e6e6e"></div>
<div class="a" style="left:991px;top:270.29999999999995px;width:496.5px;height:1.2px;background:#6e6e6e"></div>
<div class="a" style="left:991px;top:287.5px;width:496.5px;height:1.2px;background:#6e6e6e"></div>
<div class="a" style="left:991px;top:304.7px;width:496.5px;height:1.2px;background:#6e6e6e"></div>
<div class="a" style="left:991px;top:321.9px;width:496.5px;height:1.2px;background:#6e6e6e"></div>
<div class="a" style="left:991px;top:339.09999999999997px;width:496.5px;height:1.2px;background:#6e6e6e"></div>
<div class="a" style="left:991px;top:356.29999999999995px;width:496.5px;height:1.2px;background:#6e6e6e"></div>
<div class="a" style="left:991px;top:373.5px;width:496.5px;height:1.2px;background:#6e6e6e"></div>
<div class="a" style="left:991px;top:390.69999999999993px;width:496.5px;height:1.2px;background:#6e6e6e"></div>
<div class="a" style="left:991px;top:407.9px;width:496.5px;height:1.2px;background:#6e6e6e"></div>
<div class="a" style="left:991px;top:425.09999999999997px;width:496.5px;height:1.2px;background:#6e6e6e"></div>
<div class="a" style="left:991px;top:442.29999999999995px;width:496.5px;height:1.2px;background:#6e6e6e"></div>
<div class="a" style="left:991px;top:459.5px;width:496.5px;height:1.2px;background:#6e6e6e"></div>
<div class="a" style="left:991px;top:476.69999999999993px;width:496.5px;height:1.2px;background:#6e6e6e"></div>
<div class="a" style="left:991px;top:493.9px;width:496.5px;height:1.2px;background:#6e6e6e"></div>
<div class="a" style="left:991px;top:505px;width:496.5px;height:1px;background:#909090"></div>
<div class="a" style="left:1488px;top:218.5px;width:14.5px;height:287px;background:#f0f0f0"></div>
<div class="a" style="left:1489px;top:234.2px;width:12px;height:8.5px;background:#cdcdcd"></div>
<svg class="a" style="left:1488px;top:221px" width="15" height="12"><path d="M3.8 8l3.7-3.6 3.7 3.6" fill="none" stroke="#555" stroke-width="1.3"/></svg>
<svg class="a" style="left:1488px;top:492px" width="15" height="12"><path d="M3.8 4l3.7 3.6 3.7-3.6" fill="none" stroke="#555" stroke-width="1.3"/></svg>
</div>
<div id="code">
<style>.code{font-family:"Liberation Mono",monospace;font-size:10px;line-height:14.58px;white-space:pre}.code .k{color:#30308a;font-weight:bold}.code .s{color:#4d9f4d}.code .n{color:#c84a5a}.code .i{color:#444}.code .o{color:#707070}.code .p{color:#606060}</style>
<div class="t" style="left:367.6px;top:532px;font-size:9.9px;color:#333"><span style="text-decoration:underline">E</span>xpression:</div>
<div class="a" style="left:368px;top:550px;width:854px;height:169px;background:#fff;border:1px solid #a4a4a4"></div>
<div class="a" style="left:369px;top:551px;width:30px;height:167px;background:#f0f0f0"></div>
<div class="a code" style="left:369px;top:555.50px;width:23.5px;text-align:right;color:#333">1</div>
<div class="a code" style="left:402px;top:555.50px"><span class="k">if</span> <span class="p">(</span><span class="i">molWeight</span> <span class="o">&gt;=</span> <span class="n">50.00</span> <span class="o">&amp;&amp;</span> <span class="i">molWeight</span> <span class="o">&lt;=</span> <span class="n">400.00</span> <span class="o">&amp;&amp;</span> <span class="i">xlogp</span> <span class="o">&gt;=</span> <span class="o">-</span><span class="n">5</span> <span class="o">&amp;&amp;</span> <span class="i">xlogp</span> <span class="o">&lt;=</span> <span class="o">-</span><span class="n">1</span> <span class="o">&amp;&amp;</span> <span class="i">polarSurfaceArea</span> <span class="o">&gt;</span> <span class="n">100</span> <span class="o">&amp;&amp;</span> <span class="i">polarSurfaceArea</span> <span class="o">&lt;=</span> <span class="n">140</span><span class="p">)</span> <span class="p">{</span></div>
<div class="a code" style="left:369px;top:570.13px;width:23.5px;text-align:right;color:#333">2</div>
<div class="a code" style="left:402px;top:570.13px">    <span class="k">return</span> <span class="s">&quot;small, hydrophilic, polar&quot;</span></div>
<div class="a code" style="left:369px;top:584.76px;width:23.5px;text-align:right;color:#333">3</div>
<div class="a code" style="left:402px;top:584.76px"><span class="p">}</span> <span class="k">else</span> <span class="k">if</span> <span class="p">(</span><span class="i">molWeight</span> <span class="o">&gt;=</span> <span class="n">50.00</span> <span class="o">&amp;&amp;</span> <span class="i">molWeight</span> <span class="o">&lt;=</span> <span class="n">400.00</span> <span class="o">&amp;&amp;</span> <span class="i">xlogp</span> <span class="o">&gt;</span> <span class="o">-</span><span class="n">1</span> <span class="o">&amp;&amp;</span> <span class="i">xlogp</span> <span class="o">&lt;=</span> <span class="n">1</span> <span class="o">&amp;&amp;</span> <span class="i">polarSurfaceArea</span> <span class="o">&gt;</span> <span class="n">70</span> <span class="o">&amp;&amp;</span> <span class="i">polarSurfaceArea</span> <span class="o">&lt;=</span> <span class="n">100</span><span class="p">)</span> <span class="p">{</span></div>
<div class="a code" style="left:369px;top:599.39px;width:23.5px;text-align:right;color:#333">4</div>
<div class="a code" style="left:402px;top:599.39px">    <span class="k">return</span> <span class="s">&quot;small, amphiphilic, less polar&quot;</span></div>
<div class="a code" style="left:369px;top:614.02px;width:23.5px;text-align:right;color:#333">5</div>
<div class="a code" style="left:402px;top:614.02px"><span class="p">}</span> <span class="k">else</span> <span class="k">if</span> <span class="p">(</span><span class="i">molWeight</span> <span class="o">&gt;=</span> <span class="n">50.00</span> <span class="o">&amp;&amp;</span> <span class="i">molWeight</span> <span class="o">&lt;=</span> <span class="n">400.00</span> <span class="o">&amp;&amp;</span> <span class="i">xlogp</span> <span class="o">&gt;</span> <span class="n">1</span> <span class="o">&amp;&amp;</span> <span class="i">xlogp</span> <span class="o">&lt;=</span> <span class="n">4</span> <span class="o">&amp;&amp;</span> <span class="i">polarSurfaceArea</span> <span class="o">&gt;</span> <span class="n">0</span> <span class="o">&amp;&amp;</span> <span class="i">polarSurfaceArea</span> <span class="o">&lt;=</span> <span class="n">70</span><span class="p">)</span> <span class="p">{</span></div>
<div class="a code" style="left:369px;top:628.65px;width:23.5px;text-align:right;color:#333">6</div>
<div class="a code" style="left:402px;top:628.65px">    <span class="k">return</span> <span class="s">&quot;small, lipophilic, non-polar&quot;</span></div>
<div class="a code" style="left:369px;top:643.28px;width:23.5px;text-align:right;color:#333">7</div>
<div class="a code" style="left:402px;top:643.28px"><span class="p">}</span> <span class="k">else</span> <span class="k">if</span> <span class="p">(</span><span class="i">molWeight</span> <span class="o">&gt;</span> <span class="n">400.00</span> <span class="o">&amp;&amp;</span> <span class="i">xlogp</span> <span class="o">&gt;</span> <span class="n">2</span> <span class="o">&amp;&amp;</span> <span class="i">polarSurfaceArea</span> <span class="o">&lt;</span> <span class="n">70</span><span class="p">)</span> <span class="p">{</span></div>
<div class="a code" style="left:369px;top:657.91px;width:23.5px;text-align:right;color:#333">8</div>
<div class="a code" style="left:402px;top:657.91px">    <span class="k">return</span> <span class="s">&quot;big, lipophilic, non-polar&quot;</span></div>
<div class="a code" style="left:369px;top:672.54px;width:23.5px;text-align:right;color:#333">9</div>
<div class="a code" style="left:402px;top:672.54px"><span class="p">}</span> <span class="k">else</span> <span class="p">{</span></div>
<div class="a code" style="left:369px;top:687.17px;width:23.5px;text-align:right;color:#333">10</div>
<div class="a code" style="left:402px;top:687.17px">    <span class="k">return</span> <span class="s">&quot;Not interesting&quot;</span></div>
<div class="a code" style="left:369px;top:701.80px;width:23.5px;text-align:right;color:#333">11</div>
<div class="a code" style="left:402px;top:701.80px"><span class="p">}</span></div>
</div>
</body></html>
